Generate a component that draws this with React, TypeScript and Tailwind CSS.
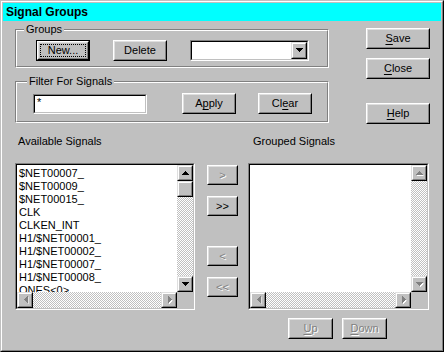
import React from 'react';

type Kids = { className?: string; children?: React.ReactNode };

const DITHER =
  'bg-[image:repeating-conic-gradient(#c0c0c0_0%_25%,#ffffff_0%_50%)] bg-[length:2px_2px]';
const OFF = 'text-[#808080] [text-shadow:1px_1px_0_#ffffff]';

// win95 style raised edge (push buttons)
function Raised({ className = '', children }: Kids) {
  return (
    <div className={`flex border border-t-white border-l-white border-r-black border-b-black ${className}`}>
      <div className="flex flex-1 items-center justify-center border border-t-[#dfdfdf] border-l-[#dfdfdf] border-r-[#808080] border-b-[#808080] bg-[#c0c0c0]">
        {children}
      </div>
    </div>
  );
}

// scrollbar buttons / thumb
function ScrollPart({ className = '', children }: Kids) {
  return (
    <div className={`flex shrink-0 border border-t-[#dfdfdf] border-l-[#dfdfdf] border-r-black border-b-black ${className}`}>
      <div className="flex flex-1 items-center justify-center border border-t-white border-l-white border-r-[#808080] border-b-[#808080] bg-[#c0c0c0]">
        {children}
      </div>
    </div>
  );
}

function Sunken({ className = '', children }: Kids) {
  return (
    <div className={`flex border border-t-[#808080] border-l-[#808080] border-r-white border-b-white ${className}`}>
      <div className="flex flex-1 border border-t-black border-l-black border-r-[#c0c0c0] border-b-[#c0c0c0] bg-white">
        {children}
      </div>
    </div>
  );
}

function Group({ label, labelPos, className = '', children }: Kids & { label: string; labelPos: string }) {
  return (
    <div className={`relative flex border border-t-[#808080] border-l-[#808080] border-r-white border-b-white ${className}`}>
      <div className="flex-1 border border-t-white border-l-white border-r-[#808080] border-b-[#808080]">{children}</div>
      <span className={`absolute top-[-7px] bg-[#c0c0c0] px-[2px] leading-[13px] ${labelPos}`}>{label}</span>
    </div>
  );
}

function Arrow({ dir, off }: { dir: 'up' | 'down' | 'left' | 'right'; off?: boolean }) {
  const rows = [1, 3, 5, 7];
  const vert = dir === 'up' || dir === 'down';
  const shape = (fill: string, d: number) =>
    rows.map((n, i) => {
      const k = dir === 'up' || dir === 'left' ? i : 3 - i;
      const c = (7 - n) / 2;
      return vert ? (
        <rect key={fill + i} x={c + d} y={k + d} width={n} height={1} fill={fill} />
      ) : (
        <rect key={fill + i} x={k + d} y={c + d} width={1} height={n} fill={fill} />
      );
    });
  const w = (vert ? 7 : 4) + 1;
  const h = (vert ? 4 : 7) + 1;
  return (
    <svg width={w} height={h} shapeRendering="crispEdges" className="translate-x-[0.5px]">
      {off ? shape('#ffffff', 1) : null}
      {shape(off ? '#808080' : '#000000', 0)}
    </svg>
  );
}

function Btn({
  className = '',
  children,
  disabled,
  isDefault,
}: Kids & { disabled?: boolean; isDefault?: boolean }) {
  const text = <span className={`text-[11px] leading-none ${disabled ? OFF : ''}`}>{children}</span>;
  if (isDefault) {
    return (
      <div className={`flex border border-black ${className}`}>
        <Raised className="flex-1">
          <div className="flex h-full w-full items-center justify-center p-px">
            <div className="flex h-full w-full items-center justify-center border border-dotted border-black">{text}</div>
          </div>
        </Raised>
      </div>
    );
  }
  return <Raised className={className}>{text}</Raised>;
}

const Key = ({ children }: Kids) => <span className="underline underline-offset-[2px]">{children}</span>;

function ListBox({ items, thumb }: { items: string[]; thumb?: boolean }) {
  return (
    <Sunken className="h-[147px] w-full">
      <div className="flex flex-1 flex-col">
        <div className="flex h-[127px]">
          <div className="flex-1 overflow-hidden pl-[2px] pt-[2px]">
            {items.map((s) => (
              <div key={s} className="h-[13px] whitespace-nowrap text-[11px] leading-[13px]">
                {s}
              </div>
            ))}
          </div>
          <div className="flex w-[16px] flex-col">
            <ScrollPart className="h-[16px]">
              <Arrow dir="up" off={!thumb} />
            </ScrollPart>
            {thumb ? <ScrollPart className="h-[16px]" /> : null}
            <div className={`flex-1 ${DITHER}`} />
            <ScrollPart className="h-[16px]">
              <Arrow dir="down" off={!thumb} />
            </ScrollPart>
          </div>
        </div>
        <div className="flex h-[16px]">
          <ScrollPart className="w-[16px]">
            <Arrow dir="left" off />
          </ScrollPart>
          <div className={`flex-1 ${DITHER}`} />
          <ScrollPart className="w-[16px]">
            <Arrow dir="right" off />
          </ScrollPart>
          <div className="w-[16px] bg-[#c0c0c0]" />
        </div>
      </div>
    </Sunken>
  );
}

const available = [
  '$NET00007_',
  '$NET00009_',
  '$NET00015_',
  'CLK',
  'CLKEN_INT',
  'H1/$NET00001_',
  'H1/$NET00002_',
  'H1/$NET00007_',
  'H1/$NET00008_',
  'ONES<0>',
];

export default function App() {
  return (
    <div className="h-[352px] w-[444px] select-none bg-[#c0c0c0] font-['Liberation_Sans',Arial,sans-serif] text-[11px] text-black">
      <div className="flex h-full border border-t-[#c0c0c0] border-l-[#c0c0c0] border-r-black border-b-black">
        <div className="flex flex-1 flex-col border border-t-white border-l-white border-r-[#808080] border-b-[#808080] p-px">
          <div className="flex h-[18px] items-center bg-[#00ffff] pl-[3px] text-[12px] font-bold">Signal Groups</div>

          <div className="flex flex-col pl-[12px] pt-[7px]">
            {/* top part: group boxes + dialog buttons */}
            <div className="flex items-start">
              <div className="flex w-[314px] flex-col">
                <Group label="Groups" labelPos="left-[8px]" className="mt-px h-[39px]">
                  <div className="flex items-start pl-[19px] pt-[9px]">
                    <Btn isDefault className="h-[21px] w-[54px]">
                      New...
                    </Btn>
                    <Btn className="ml-[23px] h-[21px] w-[54px]">Delete</Btn>
                    <Sunken className="ml-[23px] h-[21px] w-[119px]">
                      <div className="flex-1" />
                      <ScrollPart className="w-[16px]">
                        <Arrow dir="down" />
                      </ScrollPart>
                    </Sunken>
                  </div>
                </Group>
                <Group label="Filter For Signals" labelPos="left-[11px]" className="mt-[13px] h-[42px]">
                  <div className="flex items-start pl-[16px] pt-[10px]">
                    <Sunken className="mt-px h-[20px] w-[114px]">
                      <span className="pl-[2px] text-[11px] leading-[13px]">*</span>
                    </Sunken>
                    <Btn className="ml-[35px] h-[21px] w-[54px]">
                      A<Key>p</Key>ply
                    </Btn>
                    <Btn className="ml-[22px] h-[21px] w-[54px]">
                      Cl<Key>e</Key>ar
                    </Btn>
                  </div>
                </Group>
              </div>

              <div className="ml-[37px] flex flex-col">
                <Btn className="h-[21px] w-[64px]">
                  <Key>S</Key>ave
                </Btn>
                <Btn className="mt-[9px] h-[21px] w-[64px]">
                  <Key>C</Key>lose
                </Btn>
                <Btn className="mt-[24px] h-[21px] w-[64px]">
                  <Key>H</Key>elp
                </Btn>
              </div>
            </div>

            {/* signal lists */}
            <div className="mt-[11px] flex items-start">
              <div className="flex w-[180px] flex-col">
                <div className="h-[13px] pl-[3px] leading-[13px]">Available Signals</div>
                <div className="mt-[15px]">
                  <ListBox items={available} thumb />
                </div>
              </div>

              <div className="ml-[12px] flex w-[31px] flex-col pt-[30px]">
                <Btn disabled className="h-[20px] w-[31px]">
                  &gt;
                </Btn>
                <Btn className="mt-[11px] h-[20px] w-[31px]">&gt;&gt;</Btn>
                <Btn disabled className="mt-[30px] h-[20px] w-[31px]">
                  &lt;
                </Btn>
                <Btn disabled className="mt-[11px] h-[20px] w-[31px]">
                  &lt;&lt;
                </Btn>
              </div>

              <div className="ml-[10px] flex w-[181px] flex-col">
                <div className="h-[13px] pl-[5px] leading-[13px]">Grouped Signals</div>
                <div className="mt-[15px]">
                  <ListBox items={[]} />
                </div>
                <div className="mt-[8px] flex gap-[9px] pl-[40px]">
                  <Btn disabled className="h-[21px] w-[45px]">
                    <Key>U</Key>p
                  </Btn>
                  <Btn disabled className="h-[21px] w-[45px]">
                    <Key>D</Key>own
                  </Btn>
                </div>
              </div>
            </div>
          </div>
        </div>
      </div>
    </div>
  );
}
